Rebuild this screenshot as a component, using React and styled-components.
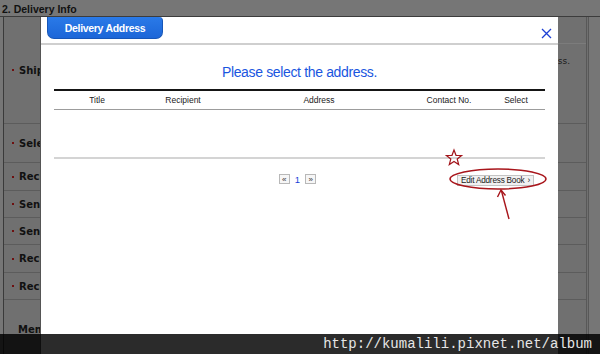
import styled, { createGlobalStyle } from 'styled-components'

const GlobalStyle = createGlobalStyle`
  html, body {
    margin: 0;
    padding: 0;
    background: #767676;
    overflow: hidden;
  }
  * {
    box-sizing: border-box;
  }
`

const Page = styled.div`
  position: relative;
  width: 600px;
  height: 354px;
  overflow: hidden;
  font-family: 'Liberation Sans', Arial, sans-serif;
`

const SectionTitle = styled.h2`
  margin: 0;
  height: 17px;
  padding: 3px 0 0 2px;
  font-size: 10.5px;
  font-weight: 700;
  color: #111;
  border-bottom: 1px solid #3c3c3c;
`

const FormTable = styled.div`
  margin-left: 3px;
  width: 586px;
  background: #707070;
  border-left: 1px solid #3a3a3a;
  border-right: 3px double #585858;
`

const FormRow = styled.div`
  display: grid;
  grid-template-columns: 37px 1fr;
  height: ${(p) => p.h}px;
  border-bottom: 1px solid #5c5c5c;
`

const Label = styled.div`
  display: flex;
  align-items: ${(p) => (p.bottom ? 'flex-start' : 'center')};
  gap: 5px;
  padding: ${(p) => (p.bottom ? '24px 0 0 14px' : '0 0 0 8px')};
  white-space: nowrap;
  overflow: hidden;
  font-family: 'DejaVu Sans', sans-serif;
  font-size: 10px;
  font-weight: 600;
  color: #111;
`

const Bullet = styled.span`
  flex-shrink: 0;
  width: 2px;
  height: 2px;
  background: #6e1010;
`

const Value = styled.div`
  display: flex;
  flex-direction: column;
`

const ValueTop = styled.div`
  height: 27px;
  border-bottom: 1px solid #7c7c7c;
`

const Note = styled.p`
  margin: 12px 16px 0 0;
  text-align: right;
  font-family: 'DejaVu Sans', sans-serif;
  font-size: 9px;
  color: #1a1a1a;
`

const Modal = styled.div`
  position: absolute;
  left: 40px;
  top: 17px;
  width: 518px;
  height: 350px;
  background: #fff;
  border-left: 1px solid #555;
`

const ModalHeader = styled.div`
  display: flex;
  justify-content: space-between;
  align-items: flex-start;
  height: 28px;
  border-bottom: 2px solid #cfcfcf;
`

const Tab = styled.div`
  margin-left: 6px;
  width: 116px;
  height: 22px;
  display: flex;
  align-items: center;
  justify-content: center;
  background: linear-gradient(#2a7ae8, #1c66d8);
  border: 1px solid #1656b8;
  border-top: none;
  border-radius: 0 4px 7px 7px;
  color: #fff;
  font-size: 10.5px;
  font-weight: 700;
  letter-spacing: -0.3px;
`

const Close = styled.svg`
  margin: 11px 6px 0 0;
`

const ModalBody = styled.div`
  padding: 0 13px;
`

const Title = styled.h1`
  margin: 19px 0 0;
  text-align: center;
  font-size: 14px;
  line-height: 16px;
  font-weight: 400;
  letter-spacing: -0.35px;
  color: #1a56e0;
`

const HeadRow = styled.div`
  display: grid;
  grid-template-columns: 86px 86px 186px 74px 60px;
  align-items: center;
  margin-top: 9px;
  height: 21px;
  border-top: 2px solid #151515;
  border-bottom: 1px solid #9c9c9c;
`

const HeadCell = styled.div`
  text-align: center;
  font-size: 8.5px;
  color: #222;
`

const TableBody = styled.div`
  height: 49px;
  border-bottom: 2px solid #d4d4d4;
`

const Footer = styled.div`
  display: grid;
  grid-template-columns: 1fr auto 1fr;
  align-items: center;
  margin-top: 13px;
  height: 14px;
`

const Pager = styled.div`
  grid-column: 2;
  display: flex;
  align-items: center;
  gap: 5px;
  margin-right: 4px;
`

const PageBox = styled.span`
  width: 11px;
  height: 10px;
  display: flex;
  align-items: center;
  justify-content: center;
  border: 1px solid #b8b8b8;
  background: #f6f6f6;
  font-size: 8px;
  color: #333;
`

const PageNum = styled.span`
  font-size: 9.5px;
  color: #1a3fd8;
`

const EditButton = styled.button`
  justify-self: end;
  margin: 2px 11px 0 0;
  height: 11px;
  padding: 0 3px;
  display: flex;
  align-items: center;
  gap: 3px;
  border: 1px solid #c4c4c4;
  background: #f1f1f1;
  font-family: 'Liberation Sans', Arial, sans-serif;
  font-size: 8.2px;
  letter-spacing: -0.2px;
  color: #1a1a1a;
  white-space: nowrap;
`

const Annotations = styled.svg`
  position: absolute;
  left: 0;
  top: 0;
  pointer-events: none;
`

const Watermark = styled.div`
  position: absolute;
  left: 0;
  bottom: 0;
  width: 600px;
  height: 20px;
  display: flex;
  align-items: center;
  justify-content: flex-end;
  padding-right: 8px;
  background: rgba(0, 0, 0, 0.83);
  font-family: 'Liberation Mono', 'Courier New', monospace;
  font-size: 14px;
  color: #e6e6e6;
`

const rows = [
  { label: 'Shipping Address', h: 107, top: true },
  { label: 'Select Delivery', h: 39 },
  { label: 'Recipient Name', h: 28 },
  { label: 'Sender Name', h: 27 },
  { label: 'Sender Phone', h: 27 },
  { label: 'Recipient Phone', h: 28 },
  { label: 'Recipient Mobile', h: 27 },
]

const columns = ['Title', 'Recipient', 'Address', 'Contact No.', 'Select']

const App = () => {
  return (
    <Page>
      <GlobalStyle />
      <SectionTitle>2. Delivery Info</SectionTitle>
      <FormTable>
        {rows.map((r) => (
          <FormRow key={r.label} h={r.h}>
            <Label>
              <Bullet />
              {r.label}
            </Label>
            <Value>
              {r.top && (
                <>
                  <ValueTop />
                  <Note>Please select the delivery address.</Note>
                </>
              )}
            </Value>
          </FormRow>
        ))}
        <FormRow h={60}>
          <Label bottom>Memo</Label>
          <Value />
        </FormRow>
      </FormTable>

      <Modal>
        <ModalHeader>
          <Tab>Delivery Address</Tab>
          <Close width="11" height="11" viewBox="0 0 11 11">
            <path d="M1 1 L10 10 M10 1 L1 10" stroke="#1c3fd4" strokeWidth="1.3" fill="none" />
          </Close>
        </ModalHeader>
        <ModalBody>
          <Title>Please select the address.</Title>
          <HeadRow>
            {columns.map((c) => (
              <HeadCell key={c}>{c}</HeadCell>
            ))}
          </HeadRow>
          <TableBody />
          <Footer>
            <Pager>
              <PageBox>«</PageBox>
              <PageNum>1</PageNum>
              <PageBox>»</PageBox>
            </Pager>
            <EditButton>
              Edit Address Book <span>›</span>
            </EditButton>
          </Footer>
        </ModalBody>
      </Modal>

      <Annotations width="600" height="354" viewBox="0 0 600 354">
        <polygon
          points="454,150 456,155.3 461.6,155.5 457.2,159 458.7,164.5 454,161.4 449.3,164.5 450.8,159 446.4,155.5 452,155.3"
          fill="none"
          stroke="#a3161c"
          strokeWidth="1.2"
        />
        <ellipse cx="498" cy="179" rx="48" ry="10" fill="none" stroke="#a8151b" strokeWidth="1.6" />
        <path d="M509 219 L501.5 191" stroke="#a8151b" strokeWidth="1.4" fill="none" />
        <path d="M497.5 197 L501 190 L505.5 195.5" stroke="#a8151b" strokeWidth="1.4" fill="none" />
      </Annotations>

      <Watermark>http://kumalili.pixnet.net/album</Watermark>
    </Page>
  )
}

export default App
